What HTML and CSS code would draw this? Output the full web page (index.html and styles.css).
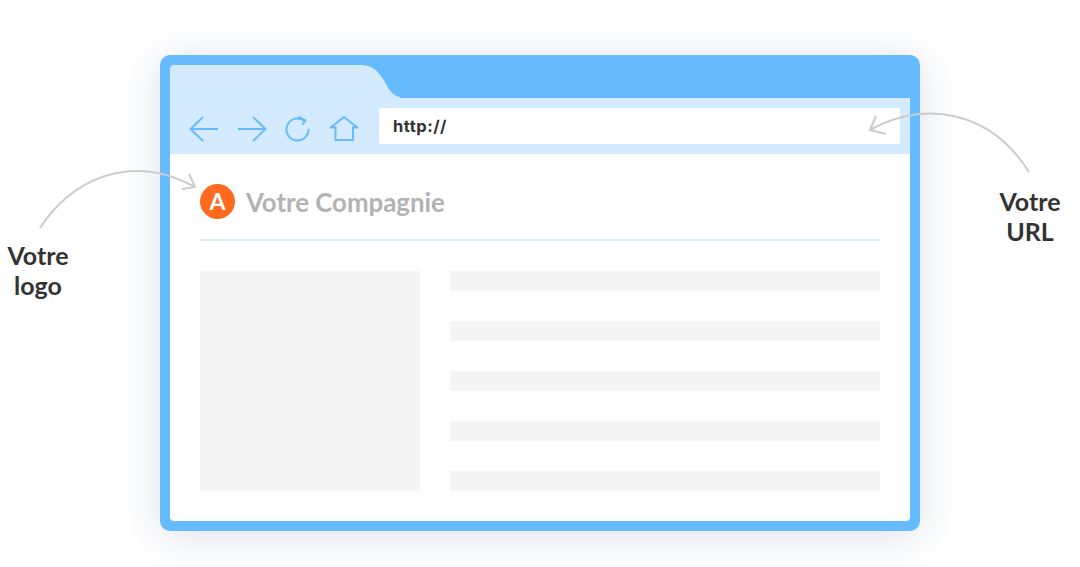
FILE: index.html
```html
<!DOCTYPE html>
<html lang="fr">
<head>
<meta charset="utf-8">
<title>Votre logo et URL</title>
<link rel="stylesheet" href="styles.css">
</head>
<body>
<main class="stage">
  <section class="browser">
    <div class="tabbar">
      <svg class="tab" width="230" height="33" viewBox="0 0 230 33"><path d="M0 33V4a4 4 0 0 1 4-4H190C202 0 207 5 213 14C219 24 222 33 236 33Z"/></svg>
    </div>
    <div class="toolbar">
      <div class="navs">
        <svg class="ico" width="30" height="26" viewBox="0 0 30 26"><path d="M29 13H1.500M14 1 1.500 13 14 25"/></svg>
        <svg class="ico" width="30" height="26" viewBox="0 0 30 26"><path d="M1 13H28.500M16 1 28.500 13 16 25"/></svg>
        <svg class="ico" width="26" height="26" viewBox="0 0 26 26"><path d="M20.300 5.700A11 11 0 1 0 23.500 13M13.500 0.800 20.500 4.300 17.500 8.800"/></svg>
        <svg class="ico" width="30" height="26" viewBox="0 0 30 26"><path d="M6.500 24H24V11.500H28L15 1 2 11.500H6.500Z"/></svg>
      </div>
      <div class="url">http://</div>
    </div>
    <div class="page">
      <header class="brand">
        <span class="logo">A</span>
        <span class="company">Votre Compagnie</span>
      </header>
      <div class="content">
        <div class="image"></div>
        <div class="rows">
          <div class="row"></div>
          <div class="row"></div>
          <div class="row"></div>
          <div class="row"></div>
          <div class="row"></div>
        </div>
      </div>
    </div>
  </section>
  <svg class="arrows" width="1080" height="567" viewBox="0 0 1080 567">
    <path d="M40 228C68 183 128 150 195 187M189 174 195 187 182 189"/>
    <path d="M1029 172C990 110 925 100 870 130M876 116 870 130 886 134"/>
  </svg>
  <p class="note note-logo">Votre<br>logo</p>
  <p class="note note-url">Votre<br>URL</p>
</main>
</body>
</html>
```
FILE: styles.css
```css
* { box-sizing: border-box; }
html, body { margin: 0; height: 100%; background: #fff; overflow: hidden; }
body { font-family: "Lato", "Open Sans", sans-serif; }
.stage { position: relative; width: 1080px; height: 567px; padding: 55px 160px 36px; }
.browser {
  width: 760px; height: 476px; padding: 10px;
  background: #66bbff; border-radius: 10px;
  display: flex; flex-direction: column;
  box-shadow: 0 5px 40px rgba(50, 70, 130, .17);
}
.tabbar { height: 33px; display: flex; }
.tab { display: block; fill: #d4ebff; }
.toolbar {
  height: 56px; background: #d4ebff;
  display: flex; padding: 10px 10px 10px 0;
}
.navs { width: 209px; display: flex; align-items: flex-start; padding: 8px 0 0 19px; gap: 18px; }
.ico { display: block; flex: none; fill: none; stroke: #66bbff; stroke-width: 2; }
.url {
  flex: 1; background: #fff; border-radius: 2px;
  padding-left: 14px; letter-spacing: .5px;
  font: 700 16.500px/36px "Inter", "Liberation Sans", sans-serif; color: #333;
}
.page {
  flex: 1; background: #fff; border-radius: 0 0 4px 4px;
  padding: 30px;
}
.brand {
  height: 57px; display: flex; align-items: flex-start; gap: 11px;
  border-bottom: 2px solid #d9eefd;
}
.logo {
  width: 35px; height: 35px; border-radius: 50%;
  background: #ff6a1f; color: #fff;
  font: 700 23px/35px "Lato", sans-serif; text-align: center;
}
.company { font: 700 25.800px/37px "Lato", sans-serif; color: #b3b3b3; }
.content { display: flex; gap: 30px; margin-top: 30px; }
.image { width: 220px; height: 220px; background: #f4f4f4; }
.rows { flex: 1; display: flex; flex-direction: column; gap: 30px; }
.row { height: 20px; background: #f4f4f4; }
.arrows { position: absolute; left: 0; top: 0; fill: none; stroke: #cccccc; stroke-width: 2; }
.note {
  position: absolute; margin: 0; width: 80px; text-align: center;
  font: 700 25px/30px "Lato", sans-serif; color: #333;
}
.note-logo { left: -2px; top: 240px; }
.note-url { left: 990px; top: 186px; }
```
